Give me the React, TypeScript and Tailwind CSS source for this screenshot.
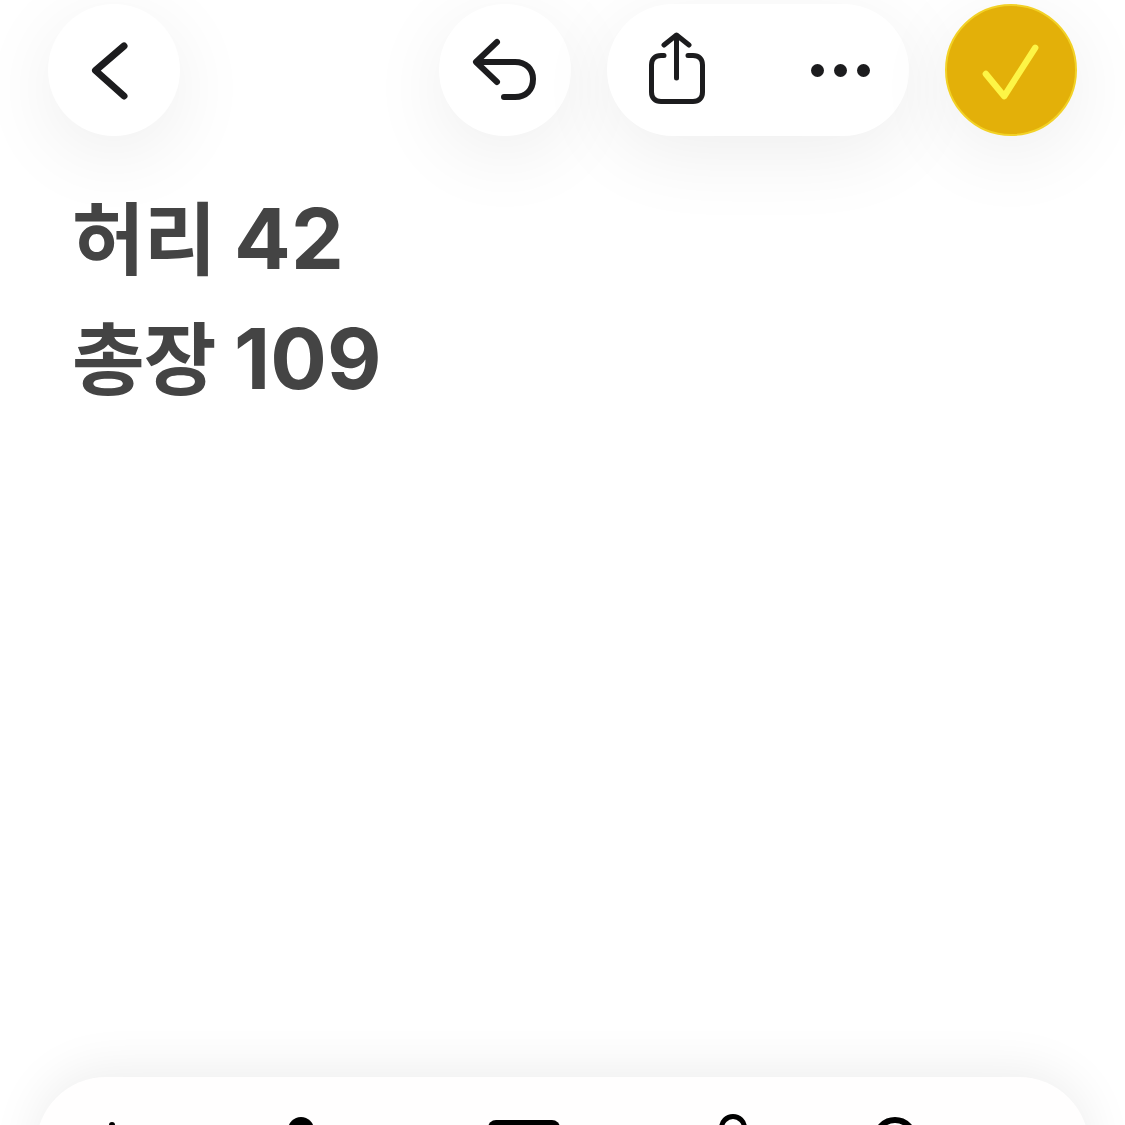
const glow = "shadow-[0_18px_80px_rgba(0,0,0,0.07)]";

function IconButton({ children }: { children: React.ReactNode }) {
  return (
    <button className={`w-[132px] h-[132px] rounded-full bg-white flex items-center justify-center ${glow}`}>
      {children}
    </button>
  );
}

function Measure({ label, value }: { label: string; value: string }) {
  return (
    <p className="h-[120px] whitespace-nowrap text-[79px] leading-[120px]">
      <span className="tracking-[-1px]">{label}</span>{" "}
      <span className="text-[84px] leading-none">{value}</span>
    </p>
  );
}

export default function App() {
  return (
    <div className="flex flex-col w-[1125px] h-[1125px] overflow-hidden bg-white font-['Inter','Noto_Sans_CJK_KR',sans-serif]">
      <div className="flex items-start pt-1 pl-12 pr-12">
        <IconButton>
          <svg width="132" height="132" viewBox="0 0 132 132" fill="none" stroke="#1c1c1e" strokeWidth="7" strokeLinecap="round" strokeLinejoin="round">
            <path d="M76 42 L47.500 66.500 L76 92" />
          </svg>
        </IconButton>

        <div className="flex-1" />

        <div className="flex gap-9">
          <IconButton>
            <svg width="132" height="132" viewBox="0 0 132 132" fill="none" stroke="#1c1c1e" strokeWidth="6" strokeLinecap="round" strokeLinejoin="round">
              <path d="M58 38 L37 58 L58 78" />
              <path d="M38 58 H76 C87 58 94 65 94 75 C94 86 87 93 76 93 H65" />
            </svg>
          </IconButton>

          <div className={`w-[302px] h-[132px] rounded-[66px] bg-white flex items-center justify-between pl-[38px] pr-[39px] ${glow}`}>
            <svg width="64" height="76" viewBox="0 0 64 76" fill="none" stroke="#1c1c1e" strokeWidth="5" strokeLinecap="round" strokeLinejoin="round">
              <path d="M19 23.500 H16 C10 23.500 6.500 27 6.500 33 V60 C6.500 66 10 69.500 16 69.500 H48 C54 69.500 57.500 66 57.500 60 V33 C57.500 27 54 23.500 48 23.500 H43" />
              <path d="M31.500 46 V4" />
              <path d="M19 13 L31.500 3 L44 13" />
            </svg>
            <div className="flex gap-[10px]">
              <span className="w-[13px] h-[13px] rounded-full bg-[#1c1c1e]" />
              <span className="w-[13px] h-[13px] rounded-full bg-[#1c1c1e]" />
              <span className="w-[13px] h-[13px] rounded-full bg-[#1c1c1e]" />
            </div>
          </div>

          <button className={`w-[132px] h-[132px] rounded-full bg-[#e3b009] border-2 border-[#f2d126] flex items-center justify-center ${glow}`}>
            <svg width="132" height="132" viewBox="0 0 132 132" fill="none" stroke="#fdf546" strokeWidth="6.500" strokeLinecap="round" strokeLinejoin="round">
              <path d="M40 70 L59 93 L91 43" />
            </svg>
          </button>
        </div>
      </div>

      <div className="mt-11 ml-[72px] text-[#444444] font-bold">
        <Measure label="허리" value="42" />
        <Measure label="총장" value="109" />
      </div>

      {/* bottom toolbar, cut off by the screen edge */}
      <div className="mt-auto mb-[-152px] mx-9 h-[200px] shrink-0 rounded-[70px] bg-[#fffefe] shadow-[0_-8px_50px_rgba(0,0,0,0.07)] flex items-start">
        <span className="ml-[73px] mt-[45px] w-[6px] h-[10px] rounded-t-full bg-black" />
        <span className="ml-[173px] mt-[40px] w-[26px] h-[26px] rounded-full bg-black" />
        <span className="ml-[174px] mt-[43px] w-[72px] h-[20px] rounded-t-[8px] bg-black" />
        <span className="ml-[159px] mt-[37px] w-[28px] h-[28px] rounded-full border-[5px] border-black" />
        <span className="ml-[126px] mt-[40px] w-[44px] h-[44px] rounded-full border-[6px] border-black" />
      </div>
    </div>
  );
}
